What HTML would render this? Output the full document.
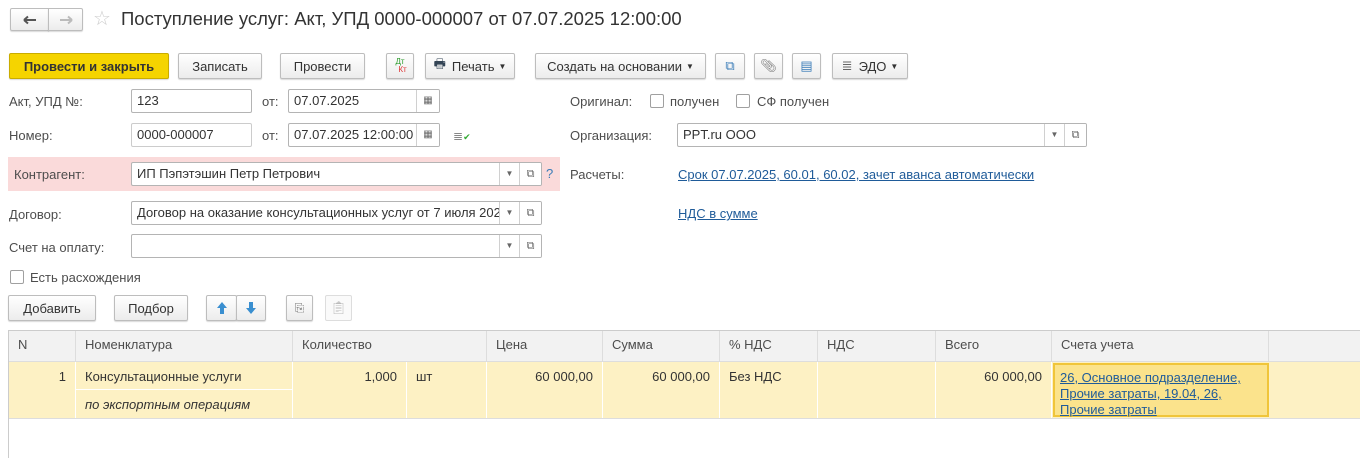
<!DOCTYPE html>
<html><head><meta charset="utf-8"><style>
*{box-sizing:border-box;margin:0;padding:0}
body{width:1360px;height:458px;background:#fff;font-family:"Liberation Sans",Arial,sans-serif;font-size:13px;color:#333;position:relative;overflow:hidden}
.a{position:absolute}
.btn{position:absolute;height:26px;border:1px solid #bdbdbd;border-radius:2px;background:linear-gradient(#fff,#ececec);box-shadow:0 1px 1px rgba(0,0,0,.15);display:flex;align-items:center;justify-content:center;color:#333;white-space:nowrap}
.inp{position:absolute;height:24px;border:1px solid #b4b4b4;border-radius:2px;background:#fff;padding-left:5px;line-height:22px;white-space:nowrap;overflow:hidden}
.lbl{position:absolute;color:#4d4d4d}
.cb{position:absolute;width:14px;height:14px;border:1px solid #a0a0a0;border-radius:2px;background:#fff}
.dd{position:absolute;top:0;height:22px;width:20px;border-left:1px solid #d0d0d0;font-size:8px;color:#666;text-align:center;line-height:22px;background:#fff}
.link{color:#1f5b99;text-decoration:underline}
.th{position:absolute;top:331px;height:30px;line-height:28px;padding-left:9px;border-right:1px solid #ddd;color:#4d4d4d}
.td{position:absolute;top:362px;height:56px;background:#fdf1c4;border-right:1px solid #fff;padding:7px 9px 0;line-height:16px}
</style></head><body>
<div class="btn" style="left:10px;top:8px;width:39px;height:23px;border-radius:2px 0 0 2px"><svg width="14" height="10"><path d="M1 5H13M1 5L5 1.5M1 5L5 8.5" stroke="#555" stroke-width="2" fill="none"/></svg></div>
<div class="btn" style="left:48px;top:8px;width:35px;height:23px;border-radius:0 2px 2px 0"><svg width="14" height="10"><path d="M1 5H13M13 5L9 1.5M13 5L9 8.5" stroke="#bbb" stroke-width="2" fill="none"/></svg></div>
<div class="a" style="left:93px;top:6px;font-size:20px;color:#ccc">☆</div>
<div class="a" style="left:121px;top:8px;font-size:18.5px;color:#333">Поступление услуг: Акт, УПД 0000-000007 от 07.07.2025 12:00:00</div>

<div class="btn" style="left:9px;top:53px;width:160px;background:#f5d400;border-color:#c9ac00;font-weight:bold">Провести и закрыть</div>
<div class="btn" style="left:178px;top:53px;width:84px">Записать</div>
<div class="btn" style="left:280px;top:53px;width:85px">Провести</div>
<div class="btn" style="left:386px;top:53px;width:28px;font-size:8px;line-height:8px;flex-direction:column"><span style="color:#2a9a2a">Дт</span><span style="color:#d33;margin-left:5px">Кт</span></div>
<div class="btn" style="left:425px;top:53px;width:90px"><span style="color:#345;margin-right:6px">🖶</span>Печать <span style="font-size:8px;margin-left:4px">▼</span></div>
<div class="btn" style="left:535px;top:53px;width:171px">Создать на основании <span style="font-size:8px;margin-left:4px">▼</span></div>
<div class="btn" style="left:715px;top:53px;width:30px;color:#3a7cb8">⧉</div>
<div class="btn" style="left:754px;top:53px;width:29px;color:#777">📎︎</div>
<div class="btn" style="left:792px;top:53px;width:29px;color:#3a7cb8">▤</div>
<div class="btn" style="left:832px;top:53px;width:76px"><span style="color:#666;margin-right:6px">≣</span>ЭДО <span style="font-size:8px;margin-left:4px">▼</span></div>

<div class="lbl" style="left:9px;top:94px">Акт, УПД №:</div>
<div class="inp" style="left:131px;top:89px;width:121px">123</div>
<div class="lbl" style="left:262px;top:94px">от:</div>
<div class="inp" style="left:288px;top:89px;width:152px">07.07.2025<div class="dd" style="right:0;width:23px;font-size:10px">▦</div></div>
<div class="lbl" style="left:9px;top:128px">Номер:</div>
<div class="inp" style="left:131px;top:123px;width:121px;border-color:#ccc">0000-000007</div>
<div class="lbl" style="left:262px;top:128px">от:</div>
<div class="inp" style="left:288px;top:123px;width:152px">07.07.2025 12:00:00<div class="dd" style="right:0;width:23px;font-size:10px">▦</div></div>
<div class="a" style="left:453px;top:129px;color:#888;font-size:12px">≣<span style="color:#3a3;font-size:9px">✔</span></div>

<div class="a" style="left:8px;top:157px;width:552px;height:34px;background:#fadada"></div>
<div class="lbl" style="left:14px;top:167px">Контрагент:</div>
<div class="inp" style="left:131px;top:162px;width:411px">ИП Пэпэтэшин Петр Петрович<div class="dd" style="right:22px">▼</div><div class="dd" style="right:0;width:22px;font-size:11px">⧉</div></div>
<div class="a" style="left:546px;top:166px;color:#3a7cb8">?</div>
<div class="lbl" style="left:9px;top:207px">Договор:</div>
<div class="inp" style="left:131px;top:201px;width:411px">Договор на оказание консультационных услуг от 7 июля 2025<div class="dd" style="right:22px">▼</div><div class="dd" style="right:0;width:22px;font-size:11px">⧉</div></div>
<div class="lbl" style="left:9px;top:240px">Счет на оплату:</div>
<div class="inp" style="left:131px;top:234px;width:411px"><div class="dd" style="right:22px">▼</div><div class="dd" style="right:0;width:22px;font-size:11px">⧉</div></div>
<div class="cb" style="left:10px;top:270px"></div>
<div class="lbl" style="left:30px;top:270px">Есть расхождения</div>

<div class="lbl" style="left:570px;top:94px">Оригинал:</div>
<div class="cb" style="left:650px;top:94px"></div>
<div class="lbl" style="left:670px;top:94px">получен</div>
<div class="cb" style="left:736px;top:94px"></div>
<div class="lbl" style="left:757px;top:94px">СФ получен</div>
<div class="lbl" style="left:570px;top:128px">Организация:</div>
<div class="inp" style="left:677px;top:123px;width:410px">PPT.ru ООО<div class="dd" style="right:22px">▼</div><div class="dd" style="right:0;width:22px;font-size:11px">⧉</div></div>
<div class="lbl" style="left:570px;top:167px">Расчеты:</div>
<div class="a link" style="left:678px;top:167px">Срок 07.07.2025, 60.01, 60.02, зачет аванса автоматически</div>
<div class="a link" style="left:678px;top:206px">НДС в сумме</div>

<div class="btn" style="left:8px;top:295px;width:88px">Добавить</div>
<div class="btn" style="left:114px;top:295px;width:74px">Подбор</div>
<div class="btn" style="left:206px;top:295px;width:31px"><svg width="10" height="12"><path d="M5 0L10 6H7V12H3V6H0Z" fill="#3a8fd0"/></svg></div>
<div class="btn" style="left:236px;top:295px;width:30px"><svg width="10" height="12"><path d="M5 12L10 6H7V0H3V6H0Z" fill="#3a8fd0"/></svg></div>
<div class="btn" style="left:286px;top:295px;width:27px;color:#777;font-size:12px">⎘</div>
<div class="btn" style="left:325px;top:295px;width:27px;color:#bbb;background:#fafafa;border-color:#ddd;box-shadow:none">📋︎</div>

<div class="a" style="left:8px;top:330px;width:1352px;height:128px;border-left:1px solid #ccc;border-top:1px solid #ccc"></div>
<div class="a" style="left:9px;top:331px;width:1351px;height:31px;background:#f2f2f2;border-bottom:1px solid #ddd"></div>
<div class="th" style="left:9px;width:67px">N</div>
<div class="th" style="left:76px;width:217px">Номенклатура</div>
<div class="th" style="left:293px;width:194px">Количество</div>
<div class="th" style="left:487px;width:116px">Цена</div>
<div class="th" style="left:603px;width:117px">Сумма</div>
<div class="th" style="left:720px;width:98px">% НДС</div>
<div class="th" style="left:818px;width:118px">НДС</div>
<div class="th" style="left:936px;width:116px">Всего</div>
<div class="th" style="left:1052px;width:217px">Счета учета</div>
<div class="a" style="left:9px;top:362px;width:1351px;height:57px;background:#fdf1c4;border-bottom:1px solid #ddd"></div>
<div class="td" style="left:9px;width:67px;text-align:right">1</div>
<div class="td" style="left:76px;width:217px;padding:0"><div style="height:28px;border-bottom:1px solid #fff;padding:7px 9px 0">Консультационные услуги</div><div style="padding:7px 9px 0;font-style:italic">по экспортным операциям</div></div>
<div class="td" style="left:293px;width:114px;text-align:right">1,000</div>
<div class="td" style="left:407px;width:80px">шт</div>
<div class="td" style="left:487px;width:116px;text-align:right">60 000,00</div>
<div class="td" style="left:603px;width:117px;text-align:right">60 000,00</div>
<div class="td" style="left:720px;width:98px">Без НДС</div>
<div class="td" style="left:818px;width:118px"></div>
<div class="td" style="left:936px;width:116px;text-align:right">60 000,00</div>
<div class="td link" style="left:1053px;top:363px;width:216px;height:54px;background:#fbe38c;border:2px solid #f0c53a;padding:5px 5px 0;line-height:16px">26, Основное подразделение, Прочие затраты, 19.04, 26, Прочие затраты</div>
</body></html>
